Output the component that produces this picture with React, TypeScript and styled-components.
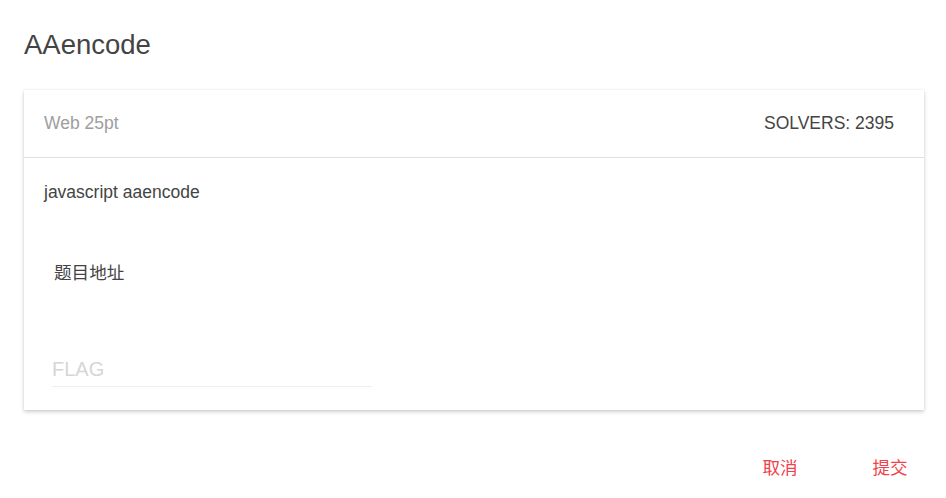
import React from 'react'
import styled, { createGlobalStyle } from 'styled-components'

const GlobalStyle = createGlobalStyle`
  html, body {
    margin: 0;
    padding: 0;
    background: #fff;
    font-family: 'Liberation Sans', Arial, 'Noto Sans CJK SC', sans-serif;
  }
`

const Page = styled.div`
  width: 946px;
  height: 498px;
  box-sizing: border-box;
  padding: 29px 12px 0 24px;
  display: flex;
  flex-direction: column;
`

const Title = styled.h1`
  margin: 0 0 29px;
  font-size: 27.5px;
  line-height: 32px;
  font-weight: 400;
  color: #444;
`

const Card = styled.div`
  margin-right: 10px;
  background: #fff;
  box-shadow: 0 2px 4px rgba(0, 0, 0, 0.18), 0 0 2px rgba(0, 0, 0, 0.08);
  display: flex;
  flex-direction: column;
`

const CardHeader = styled.div`
  height: 67px;
  display: flex;
  align-items: center;
  justify-content: space-between;
  padding: 0 30px 0 20px;
  border-bottom: 1px solid #e0e0e0;
  font-size: 17.5px;
`

const Category = styled.span`
  color: #9e9e9e;
`

const Solvers = styled.span`
  color: #444;
`

const CardBody = styled.div`
  padding: 24px 20px 23px;
  display: flex;
  flex-direction: column;
`

const Description = styled.div`
  font-size: 17.5px;
  line-height: 20px;
  color: #444;
`

const LinkText = styled.div`
  margin: 59px 0 0 10px;
  font-size: 17.6px;
  line-height: 22px;
  color: #444;
  font-family: 'Noto Sans CJK SC', sans-serif;
`

const FlagInput = styled.input`
  margin: 75px 0 0 8px;
  width: 320px;
  box-sizing: border-box;
  border: none;
  border-bottom: 1px solid #eeeeee;
  outline: none;
  padding: 0 0 6px;
  font-family: 'Liberation Sans', Arial, sans-serif;
  font-size: 20px;
  line-height: 22px;
  color: #444;
  background: transparent;

  &::placeholder {
    color: #d6d6d6;
  }
`

const Actions = styled.div`
  display: flex;
  justify-content: flex-end;
  gap: 22px;
  margin-top: 38px;
`

const ActionButton = styled.button`
  width: 88px;
  height: 36px;
  border: none;
  background: transparent;
  color: #f2414b;
  font-family: 'Noto Sans CJK SC', sans-serif;
  font-size: 17.6px;
  cursor: pointer;
  padding: 0;
`

export default function App() {
  return (
    <>
      <GlobalStyle />
      <Page>
        <Title>AAencode</Title>
        <Card>
          <CardHeader>
            <Category>Web 25pt</Category>
            <Solvers>SOLVERS: 2395</Solvers>
          </CardHeader>
          <CardBody>
            <Description>javascript aaencode</Description>
            <LinkText>题目地址</LinkText>
            <FlagInput placeholder="FLAG" />
          </CardBody>
        </Card>
        <Actions>
          <ActionButton>取消</ActionButton>
          <ActionButton>提交</ActionButton>
        </Actions>
      </Page>
    </>
  )
}
